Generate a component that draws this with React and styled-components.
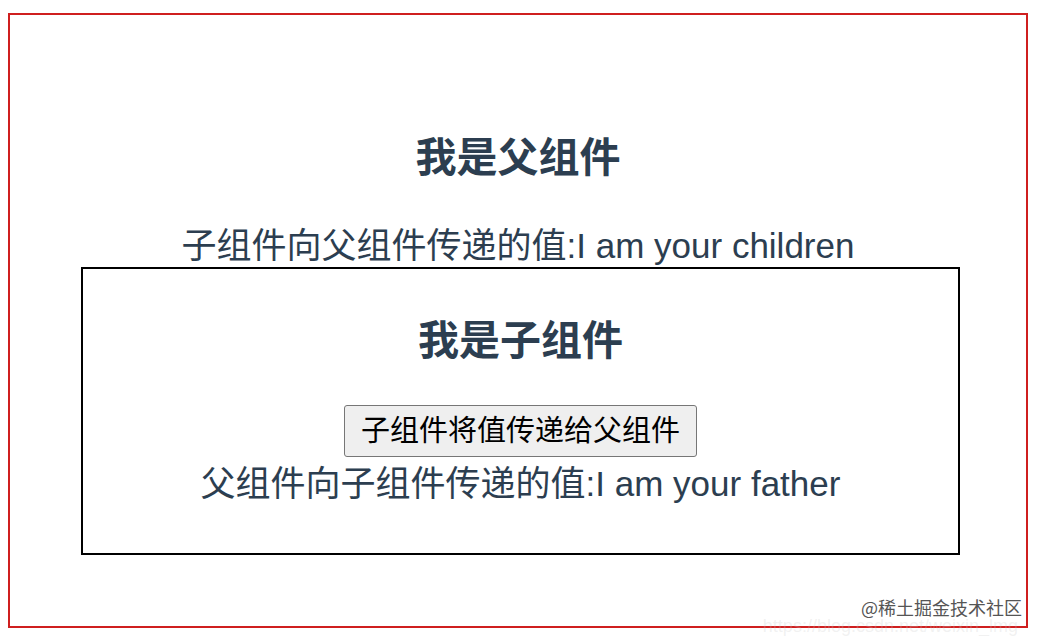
import React from "react";
import styled, { createGlobalStyle } from "styled-components";

const Global = createGlobalStyle`
  html, body { margin: 0; padding: 0; background: #fff; }
  body {
    font-family: "Liberation Sans", "Noto Sans CJK SC", Arial, sans-serif;
    color: #2c3e50;
  }
`;

const Page = styled.div`
  position: relative;
  width: 1040px;
  height: 636px;
  padding: 13px 12px 0 8px;
  box-sizing: border-box;
  overflow: hidden;
`;

const Parent = styled.div`
  height: 615px;
  box-sizing: border-box;
  border: 2px solid #cf1f1f;
  padding-top: 118px;
  display: flex;
  flex-direction: column;
  align-items: center;
`;

const Title = styled.h1`
  margin: 0;
  font-size: 41px;
  line-height: 50px;
  font-weight: 700;
  text-align: center;
`;

const Line = styled.p`
  margin: ${(p) => p.$top || 0}px 0 0;
  font-size: 35px;
  line-height: 40px;
  text-align: center;
`;

const Child = styled.div`
  align-self: flex-start;
  margin: 1px 0 0 71px;
  width: 879px;
  box-sizing: border-box;
  border: 2px solid #000;
  padding: 47px 0 49px;
  display: flex;
  flex-direction: column;
  align-items: center;
`;

const Button = styled.button`
  margin-top: 39px;
  height: 52px;
  padding: 0 16px;
  box-sizing: border-box;
  border: 1px solid #767676;
  border-radius: 3px;
  background: #efefef;
  color: #000;
  font-family: "Liberation Sans", "Noto Sans CJK SC", Arial, sans-serif;
  font-size: 29px;
  line-height: 36px;
  cursor: pointer;
`;

const Watermark = styled.div`
  position: absolute;
  right: 18px;
  bottom: 18px;
  font-family: "Noto Sans CJK SC", sans-serif;
  font-size: 18px;
  line-height: 22px;
  color: #555;
`;

const Faint = styled.div`
  position: absolute;
  right: 22px;
  bottom: 2px;
  font-family: "Liberation Sans", sans-serif;
  font-size: 18px;
  line-height: 16px;
  color: rgba(200, 200, 200, 0.25);
`;

export default function App() {
  return (
    <>
      <Global />
      <Page>
        <Parent>
          <Title>我是父组件</Title>
          <Line $top={43}>子组件向父组件传递的值:I am your children</Line>
          <Child>
            <Title>我是子组件</Title>
            <Button>子组件将值传递给父组件</Button>
            <Line $top={7}>父组件向子组件传递的值:I am your father</Line>
          </Child>
        </Parent>
        <Watermark>@稀土掘金技术社区</Watermark>
        <Faint>https://blog.csdn.net/weixin_lmg</Faint>
      </Page>
    </>
  );
}
